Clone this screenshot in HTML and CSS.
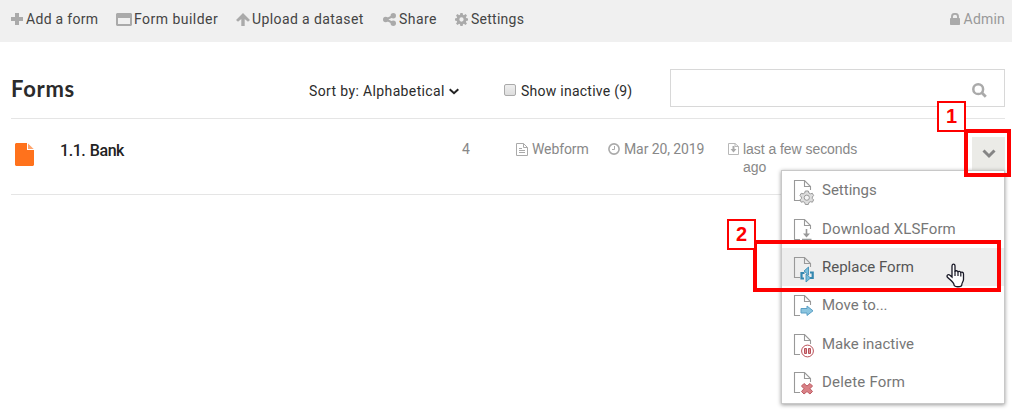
FILE: index.html
```html
<!DOCTYPE html>
<html lang="en">
<head>
<meta charset="utf-8">
<title>Forms</title>
<link rel="stylesheet" href="styles.css">
</head>
<body>
<header class="topbar">
  <nav class="nav">
    <a class="nav-item"><svg width="12" height="12" viewBox="0 0 12 12"><path d="M4 0h4v4h4v4H8v4H4V8H0V4h4z"/></svg><span class="add">Add a form</span></a>
    <a class="nav-item"><svg width="16" height="13" viewBox="0 0 16 13"><path fill-rule="evenodd" d="M1 0h14l1 1v11l-1 1H1l-1-1V1zM2 5v6h12V5z"/></svg><span class="builder">Form builder</span></a>
    <a class="nav-item"><svg width="14" height="13" viewBox="0 0 14 13"><path d="M7 0l7 7-2 1.800-3.300-2.800v7H5.300V6L2 8.800 0 7z"/></svg><span class="upload">Upload a dataset</span></a>
    <a class="nav-item"><svg width="13" height="13" viewBox="0 0 13 13"><path d="M10 3L3 6.500l7 3.500" fill="none" stroke="#aaa" stroke-width="2"/><circle cx="10.300" cy="2.700" r="2.700"/><circle cx="2.700" cy="6.500" r="2.700"/><circle cx="10.300" cy="10.300" r="2.700"/></svg><span class="share">Share</span></a>
    <a class="nav-item"><svg width="13" height="13" viewBox="0 0 14 14"><path fill-rule="evenodd" d="M5.800 0h2.400l.4 2 1 .4L11.300 1.200l1.600 1.600-1.200 1.700.4 1 1.900.4v2.300l-1.900.4-.4 1 1.200 1.700-1.600 1.600-1.700-1.200-1 .4-.4 1.900H5.800l-.4-1.900-1-.4-1.700 1.200-1.600-1.600 1.200-1.700-.4-1L0 8.200V5.900l1.900-.4.4-1L1.100 2.800l1.600-1.600 1.700 1.200 1-.4zM7 4.700a2.300 2.300 0 100 4.600 2.300 2.300 0 000-4.600z"/></svg><span class="settings">Settings</span></a>
  </nav>
  <a class="admin"><svg width="10" height="12" viewBox="0 0 10 12"><path d="M2 6V3.500a3 2.600 0 016 0V6" fill="none" stroke="#aaa" stroke-width="1.900"/><rect y="5" width="10" height="7" rx=".7"/></svg><span>Admin</span></a>
</header>
<main class="content">
  <section class="toolbar">
    <h1>Forms</h1>
    <div class="sort"><span>Sort by: Alphabetical</span><svg width="10" height="7" viewBox="0 0 10 7"><path d="M.7 1.200L5 5.200l4.300-4" fill="none" stroke="#222" stroke-width="2"/></svg></div>
    <label class="inactive"><i class="check"></i><span>Show inactive (9)</span></label>
    <div class="search"><svg width="15" height="15" viewBox="0 0 15 15" fill="none" stroke="#aaa"><circle cx="6.200" cy="6.200" r="4.900" stroke-width="2.500"/><path d="M9.800 9.800l4 4" stroke-width="2.800"/></svg></div>
  </section>
  <section class="form-row">
    <svg class="file" width="19" height="23" viewBox="0 0 19 23"><path d="M1 0h11v7h7v15l-1 1H1l-1-1V1z" fill="#ff721c"/><path d="M13 .5L18.700 6H13z" fill="#ffa56e"/></svg>
    <strong class="name">1.1. Bank</strong>
    <span class="count">4</span>
    <div class="meta"><svg width="12" height="13" viewBox="0 0 12 13" fill="none" stroke="#aaa"><path d="M.5.5h7l4 4v8H.5zM7.500.5v4h4M3 5.500h3M3 7.500h6M3 9.500h6"/></svg><span class="web">Webform</span></div>
    <div class="meta"><svg width="12" height="12" viewBox="0 0 12 12" fill="none" stroke="#aaa"><circle cx="6" cy="6" r="5.100" stroke-width="1.600"/><path d="M6.500 3v3.500H4"/></svg><span class="date">Mar 20, 2019</span></div>
    <div class="meta"><svg width="11" height="12" viewBox="0 0 11 12" fill="none" stroke="#b8b8b8"><path d="M.5.5H7l3.500 3v8H.5zM7 .5v3h3.500"/><path d="M5.500 3v4" stroke="#aaa" stroke-width="2"/><path d="M2.500 6h6l-3 3.500z" fill="#aaa" stroke="none"/></svg><span class="last">last a few seconds ago</span></div>
    <button class="toggle"><svg width="14" height="10" viewBox="0 0 14 10"><path d="M1.500 1.500L7 7l5.500-5.500" fill="none" stroke="#858585" stroke-width="3"/></svg></button>
  </section>
</main>
<svg class="symbols" width="0" height="0"><symbol id="page" viewBox="0 0 22 26"><path d="M7 20.500H1.500v-20h10l6 6V10M11.500.5v6h6" fill="none" stroke="#999" stroke-width="1.100"/></symbol></svg>
<div class="menu">
  <a class="menu-item"><svg width="22" height="26"><use href="#page" width="22" height="26"/><path d="M12.300 11h3l.6 2 1.600.8 1.900-.5 1.200 2.300-1.300 1.400v1.500l1.300 1.400-1.200 2.300-1.900-.5-1.600.8-.6 2h-3l-.6-2-1.500-.8-2 .5L7 19.900l1.400-1.400V17L7 15.600l1.200-2.300 2 .5 1.500-.8z" fill="#ddd" stroke="#999"/><circle cx="13.800" cy="17.700" r="2.600" fill="#f5f5f5" stroke="#999"/></svg><span class="m1">Settings</span></a>
  <a class="menu-item"><svg width="22" height="26"><use href="#page" width="22" height="26"/><path d="M13.500 10v7M9 20.500h9.500" stroke="#999" stroke-width="1.600"/><path d="M10 14.500h7l-3.500 4z" fill="#999"/></svg><span class="m2">Download XLSForm</span></a>
  <a class="menu-item selected"><svg width="22" height="26"><use href="#page" width="22" height="26"/><path d="M11.500 16H8.500v5.500h2.500M17 15.500h2.700V21H17" fill="none" stroke="#3588b0" stroke-width="2.200"/><path d="M15.500 10v8l-4.500-4zM13 17v8l4.500-4z" fill="#78bedc" stroke="#3588b0" stroke-width=".8"/></svg><span class="m3">Replace Form</span></a>
  <a class="menu-item"><svg width="22" height="26"><use href="#page" width="22" height="26"/><path d="M8 13.500h6V11l6 4.800-6 4.700V18H8z" fill="#8bc5df" stroke="#5b9fc5"/></svg><span class="m4">Move to...</span></a>
  <a class="menu-item"><svg width="22" height="26"><use href="#page" width="22" height="26"/><circle cx="14.500" cy="17" r="5.900" fill="#fff" stroke="#b94f58"/><path d="M11.500 14.500h2v5h-2zM15.500 14.500h2v5h-2z" fill="#dc969b" stroke="#b94f58"/></svg><span class="m5">Make inactive</span></a>
  <a class="menu-item"><svg width="22" height="26"><use href="#page" width="22" height="26"/><path d="M11 11.500l3 2.500 3-2.500 2.500 2.500-2.500 2.700 2.500 2.800-2.500 2.500-3-2.500-3 2.500-2.500-2.500 2.500-2.800L8.500 14z" fill="#d98186" stroke="#bd5b63"/></svg><span class="m6">Delete Form</span></a>
</div>
<div class="mark mark-toggle"></div><div class="badge badge-one">1</div>
<div class="mark mark-replace"></div><div class="badge badge-two">2</div>
<svg class="pointer" width="19" height="25" viewBox="0 0 19 25"><path d="M6 14V3.200C6 .4 9 .4 9 3.200V9c0-1.800 3-1.600 3 .3 0-1.500 2.800-1.300 2.800.6 0-1.300 2.700-1 2.700 1v5.600c0 2-1.700 3-1.700 5.200 0 2.700-7.800 2.700-7.800 0C7.500 19 3.800 16.800 1.500 14.300 0 12.400 2.300 10.700 4 12.300z" fill="#fff" stroke="#181826" stroke-width="1.300"/><path d="M9 8.500V13M12 9v4M14.800 10v3.500" stroke="#181826" stroke-width="1.200"/></svg>
</body>
</html>
```
FILE: styles.css
```css
* { box-sizing: border-box; }
body { margin: 0; width: 1012px; height: 412px; overflow: hidden; position: relative; background: #fff; font: 14px/18px Roboto, sans-serif; color: #2b2b2b; }
svg { flex: none; display: block; }
span { white-space: nowrap; }
.topbar { height: 42px; padding: 0 7px 4px 11px; background: #f0f0f0; display: flex; justify-content: space-between; align-items: center; }
.nav { display: grid; grid-template-columns: 105px 120px 147px 72px 80px; }
.nav-item, .admin { display: flex; align-items: center; color: #444; fill: #aaa; }
.nav-item svg { margin-right: 3px; }
.add { letter-spacing: .3px; }
.builder { letter-spacing: .47px; }
.upload { letter-spacing: .4px; }
.share { letter-spacing: .45px; }
.settings { letter-spacing: .25px; }
.admin { color: #999; gap: 4px; letter-spacing: .2px; }
.nav-item:nth-child(2) svg { margin-right: 2px; }
.nav-item:nth-child(3) svg { margin-right: 2px; }
.content { padding: 0 7px 0 11px; }
.toolbar { height: 77px; border-bottom: 1px solid #e5e5e5; display: grid; grid-template-columns: 298px 195px 166px 335px; }
h1 { margin: 34px 0 0; font: 700 22px/26px Lato, sans-serif; letter-spacing: .7px; }
.sort { display: flex; align-items: center; gap: 4px; height: 20px; margin-top: 39px; letter-spacing: .37px; }
.inactive { display: flex; align-items: center; gap: 5px; height: 20px; margin-top: 39px; letter-spacing: .25px; }
.check { width: 12px; height: 12px; margin-top: -3px; border: 1px solid #aaa; border-radius: 2px; background: linear-gradient(#eee, #ddd); }
.search { height: 38px; margin-top: 27px; border: 1px solid #d8d8d8; padding: 13px 17px; display: flex; justify-content: flex-end; }
.form-row { height: 76px; border-bottom: 1px solid #e5e5e5; display: grid; grid-template-columns: 45px 406px 54px 92px 120px 240px 33px; padding-left: 4px; align-items: start; color: #888; }
.file { margin-top: 24px; }
.name { font: 500 16px/20px Roboto, sans-serif; color: #222; margin-top: 22px; letter-spacing: -.45px; word-spacing: 1px; }
.count { margin-top: 21px; margin-left: -4px; }
.meta { display: flex; gap: 4px; margin-top: 21px; margin-left: -4px; }
.meta svg { margin-top: 3px; }
.web, .date { letter-spacing: -.1px; }
.last { font-family: "Liberation Sans", Arial, sans-serif; white-space: normal; width: 120px; letter-spacing: -.05px; }
.toggle { border: 0; width: 33px; height: 34px; padding: 0; margin-top: 18px; background: #ebebe7; display: flex; align-items: center; justify-content: center; }
.symbols { position: absolute; }
.menu { position: absolute; left: 781px; top: 170px; width: 224px; height: 234px; border: 1px solid #c8c8c8; background: #fff; box-shadow: 0 1px 4px #999; }
.menu-item { height: 38.4px; display: flex; align-items: center; padding-left: 11px; gap: 7px; color: #777; font-size: 15px; }
.menu-item svg { margin-top: 6px; }
.m2 { letter-spacing: .13px; }
.m6 { letter-spacing: .2px; }
.selected { background: #eee; color: #555; }
.mark { position: absolute; border: 4px solid #fe0000; }
.mark-toggle { left: 964px; top: 129px; width: 47px; height: 48px; }
.mark-replace { left: 753px; top: 240px; width: 248px; height: 52px; }
.badge { position: absolute; width: 29px; height: 31px; border: 2px solid #fe0000; background: #fff; color: #fe0000; font: 700 20px/26px "Liberation Sans", Arial, sans-serif; text-align: center; }
.badge-one { left: 937px; top: 101px; }
.badge-two { left: 727px; top: 219px; }
.pointer { position: absolute; left: 946px; top: 263px; }
```
